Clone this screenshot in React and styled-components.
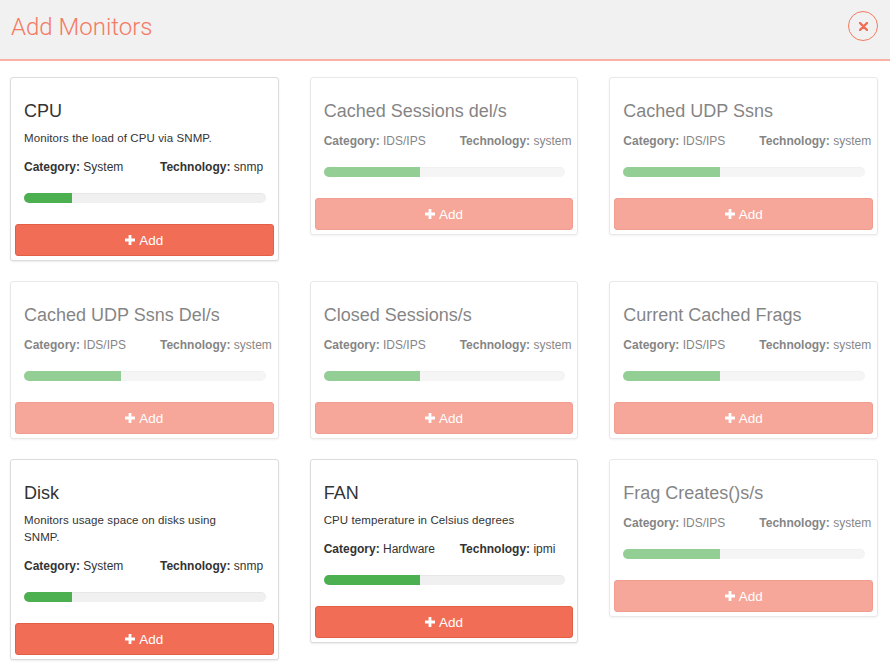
import React from 'react';
import styled, { createGlobalStyle } from 'styled-components';

const monitors = [
    { name: 'CPU', description: 'Monitors the load of CPU via SNMP.', category: 'System', technology: 'snmp', progress: 20, active: true },
    { name: 'Cached Sessions del/s', category: 'IDS/IPS', technology: 'system', progress: 40 },
    { name: 'Cached UDP Ssns', category: 'IDS/IPS', technology: 'system', progress: 40 },
    { name: 'Cached UDP Ssns Del/s', category: 'IDS/IPS', technology: 'system', progress: 40 },
    { name: 'Closed Sessions/s', category: 'IDS/IPS', technology: 'system', progress: 40 },
    { name: 'Current Cached Frags', category: 'IDS/IPS', technology: 'system', progress: 40 },
    { name: 'Disk', description: 'Monitors usage space on disks using SNMP.', category: 'System', technology: 'snmp', progress: 20, active: true },
    { name: 'FAN', description: 'CPU temperature in Celsius degrees', category: 'Hardware', technology: 'ipmi', progress: 40, active: true },
    { name: 'Frag Creates()s/s', category: 'IDS/IPS', technology: 'system', progress: 40 },
];

const GlobalStyle = createGlobalStyle`
    body {
        margin: 0;
        background: #fff;
        font-family: "Liberation Sans", Arial, sans-serif;
        color: #333;
    }
`;

const PlusIcon = () => (
    <svg width="10" height="10" viewBox="0 0 10 10" aria-hidden="true">
        <path d="M3.6 0h2.8v3.6H10v2.8H6.4V10H3.6V6.4H0V3.6h3.6z" fill="currentColor" />
    </svg>
);

const MonitorCard = ({ monitor }) => (
    <Card $active={monitor.active}>
        <CardBody>
            <Title>{monitor.name}</Title>
            {monitor.description && <Description>{monitor.description}</Description>}
            <Meta>
                <span><b>Category:</b> {monitor.category}</span>
                <span><b>Technology:</b> {monitor.technology}</span>
            </Meta>
            <Progress>
                <ProgressFill style={{ width: `${monitor.progress}%` }} />
            </Progress>
        </CardBody>
        <CardFooter>
            <AddButton type="button">
                <PlusIcon />
                Add
            </AddButton>
        </CardFooter>
    </Card>
);

const App = () => {
    return (
        <>
            <GlobalStyle />
            <Header>
                <HeaderTitle>Add Monitors</HeaderTitle>
                <CloseButton type="button" aria-label="Close">
                    <svg width="9" height="9" viewBox="0 0 9 9" aria-hidden="true">
                        <path d="M1 1l7 7M8 1L1 8" stroke="currentColor" strokeWidth="2.4" strokeLinecap="round" />
                    </svg>
                </CloseButton>
            </Header>
            <Grid>
                {monitors.map((m) => (
                    <MonitorCard key={m.name} monitor={m} />
                ))}
            </Grid>
        </>
    );
};

const Header = styled.header`
    height: 59px;
    background: #f1f1f1;
    border-bottom: 2px solid #f9b1a5;
    display: flex;
    align-items: center;
    justify-content: space-between;
    padding: 0 12px 0 11px;
    box-sizing: content-box;
`;

const HeaderTitle = styled.h1`
    margin: 0 0 6px;
    font-family: Roboto, "Liberation Sans", sans-serif;
    font-weight: 300;
    font-size: 24px;
    color: #f47a63;
`;

const CloseButton = styled.button`
    width: 30px;
    height: 30px;
    margin-bottom: 7px;
    border-radius: 50%;
    border: 1px solid #f47a63;
    background: transparent;
    color: #f26c55;
    display: flex;
    align-items: center;
    justify-content: center;
    padding: 0;
    cursor: pointer;
`;

const Grid = styled.main`
    display: grid;
    grid-template-columns: repeat(3, minmax(0, 1fr));
    column-gap: 31px;
    row-gap: 20px;
    align-items: start;
    padding: 16px 12px 20px 10px;
`;

const Card = styled.div`
    min-width: 0;
    border: 1px solid #dcdcdc;
    border-radius: 3px;
    background: #fff;
    box-shadow: 0 1px 2px rgba(0, 0, 0, 0.08);
    opacity: ${(p) => (p.$active ? 1 : 0.6)};
`;

const CardBody = styled.div`
    padding: 23px 12px 0 13px;
`;

const Title = styled.h4`
    margin: 0;
    font-size: 18px;
    line-height: 20px;
    font-weight: 400;
    color: #333;
`;

const Description = styled.p`
    max-width: 218px;
    margin: 9px 0 0;
    font-size: 11.5px;
    letter-spacing: 0.1px;
    line-height: 17px;
`;

const Meta = styled.div`
    display: grid;
    grid-template-columns: 136px minmax(0, 1fr);
    margin-top: 12px;
    font-size: 12px;
    line-height: 17px;
    white-space: nowrap;

    b {
        font-weight: 700;
    }
`;

const Progress = styled.div`
    height: 10px;
    margin-top: 17px;
    border-radius: 5px;
    background: #f0f0f0;
    overflow: hidden;
    box-shadow: inset 0 1px 1px rgba(0, 0, 0, 0.04);
`;

const ProgressFill = styled.div`
    height: 100%;
    background: #4caf50;
`;

const CardFooter = styled.div`
    padding: 21px 4px 4px;
`;

const AddButton = styled.button`
    width: 100%;
    height: 32px;
    display: flex;
    align-items: center;
    justify-content: center;
    gap: 4px;
    border: 1px solid #e45d45;
    border-radius: 3px;
    background: #f26d56;
    color: #fff;
    font-family: "Liberation Sans", Arial, sans-serif;
    font-size: 13.5px;
    cursor: pointer;
`;

export default App;
